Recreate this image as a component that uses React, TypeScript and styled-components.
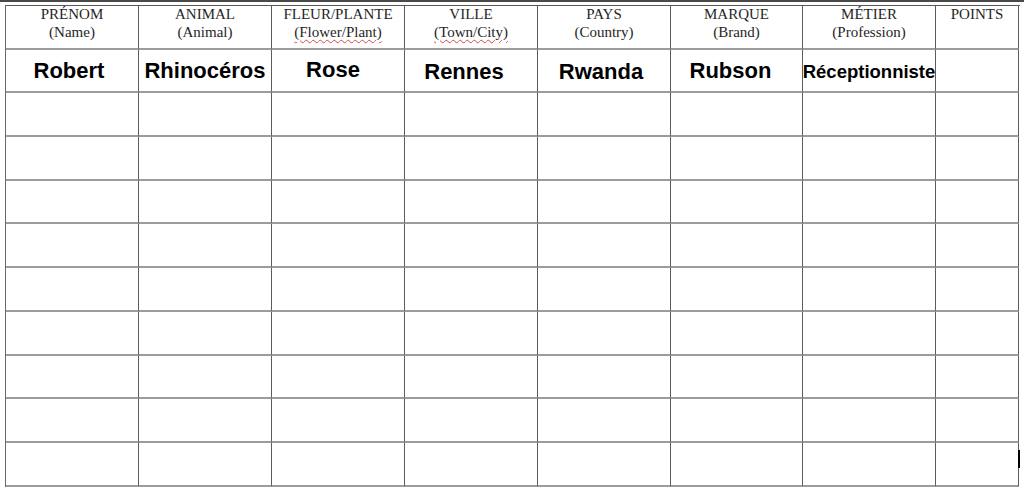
import React from 'react'
import styled, { createGlobalStyle } from 'styled-components'

const GlobalStyle = createGlobalStyle`
  html, body {
    margin: 0;
    padding: 0;
    background: #fff;
  }
  body {
    font-family: "Liberation Serif", "Times New Roman", serif;
  }
`

type Column = {
  title: string
  sub?: string
  typo?: boolean
  word?: string
  small?: boolean
  shift?: number
  drop?: number
}

const columns: Column[] = [
  { title: 'PRÉNOM', sub: '(Name)', word: 'Robert', shift: -3 },
  { title: 'ANIMAL', sub: '(Animal)', word: 'Rhinocéros' },
  { title: 'FLEUR/PLANTE', sub: '(Flower/Plant)', typo: true, word: 'Rose', shift: -5, drop: -1 },
  { title: 'VILLE', sub: '(Town/City)', typo: true, word: 'Rennes', shift: -7, drop: 1 },
  { title: 'PAYS', sub: '(Country)', word: 'Rwanda', shift: -3, drop: 1 },
  { title: 'MARQUE', sub: '(Brand)', word: 'Rubson', shift: -6 },
  { title: 'MÉTIER', sub: '(Profession)', word: 'Réceptionniste', small: true },
  { title: 'POINTS' },
]

// heights of header row + data rows, so lines land where the sheet has them
const rowHeights = [44, 43, 44, 44, 43, 44, 44, 44, 43, 44, 44]
const emptyRows = 9

const App = () => {
  return (
    <Page>
      <GlobalStyle />
      <PageEdge />
      <Sheet>
        <Grid>
          {columns.map((c) => (
            <HeadCell key={c.title}>
              <HeadTitle>{c.title}</HeadTitle>
              {c.sub && <HeadSub $typo={c.typo}>{c.sub}</HeadSub>}
            </HeadCell>
          ))}
          {columns.map((c) => (
            <WordCell key={'w' + c.title}>
              {c.word && (
                <Word $small={c.small} $shift={c.shift || 0} $drop={c.drop || 0}>
                  {c.word}
                </Word>
              )}
            </WordCell>
          ))}
          {Array.from({ length: emptyRows }).map((_, r) =>
            columns.map((c) => <Cell key={r + c.title} />)
          )}
        </Grid>
        <Caret />
      </Sheet>
    </Page>
  )
}

export default App

const Page = styled.div`
  width: 1024px;
  height: 487px;
  overflow: hidden;
  background: #fff;
`

const PageEdge = styled.div`
  height: 2px;
  background: #4a4a4a;
  margin-bottom: 3px;
`

const Sheet = styled.div`
  position: relative;
  margin-left: 5px;
`

const Grid = styled.div`
  display: grid;
  width: 1014px;
  grid-template-columns: 133px 133px 133px 133px 133px 132px 133px 83px;
  grid-template-rows: ${rowHeights.map((h) => h + 'px').join(' ')} 60px;
  border-top: 1px solid #5a5a5a;
  border-left: 1px solid #6a6a6a;
`

const Cell = styled.div`
  box-sizing: border-box;
  border-right: 1px solid #5c5c5c;
  border-bottom: 2px solid #9c9c9c;
  min-width: 0;
`

const HeadCell = styled(Cell)`
  display: flex;
  flex-direction: column;
  align-items: center;
  color: #262626;
  font-family: "Liberation Serif", "Times New Roman", serif;
  font-size: 15px;
  line-height: 17px;
  text-align: center;
`

const HeadTitle = styled.div`
  white-space: nowrap;
`

const HeadSub = styled.div<{ $typo?: boolean }>`
  white-space: nowrap;
  margin-top: 1px;
  ${(p) =>
    p.$typo &&
    `
    text-decoration: underline wavy #d44a4a;
    text-decoration-thickness: 1px;
    text-underline-offset: 2px;
  `}
`

const WordCell = styled(Cell)`
  display: flex;
  align-items: center;
  justify-content: center;
  overflow: visible;
`

const Word = styled.div<{ $small?: boolean; $shift: number; $drop: number }>`
  font-family: "Liberation Sans", Arial, sans-serif;
  font-weight: bold;
  font-size: ${(p) => (p.$small ? '18.5px' : '22px')};
  color: #000;
  white-space: nowrap;
  margin-right: ${(p) => -p.$shift * 2}px;
  margin-top: ${(p) => (p.$small ? 3 : 1) + p.$drop * 2}px;
`

const Caret = styled.div`
  position: absolute;
  left: 1013px;
  top: 445px;
  width: 2px;
  height: 18px;
  background: #000;
`
